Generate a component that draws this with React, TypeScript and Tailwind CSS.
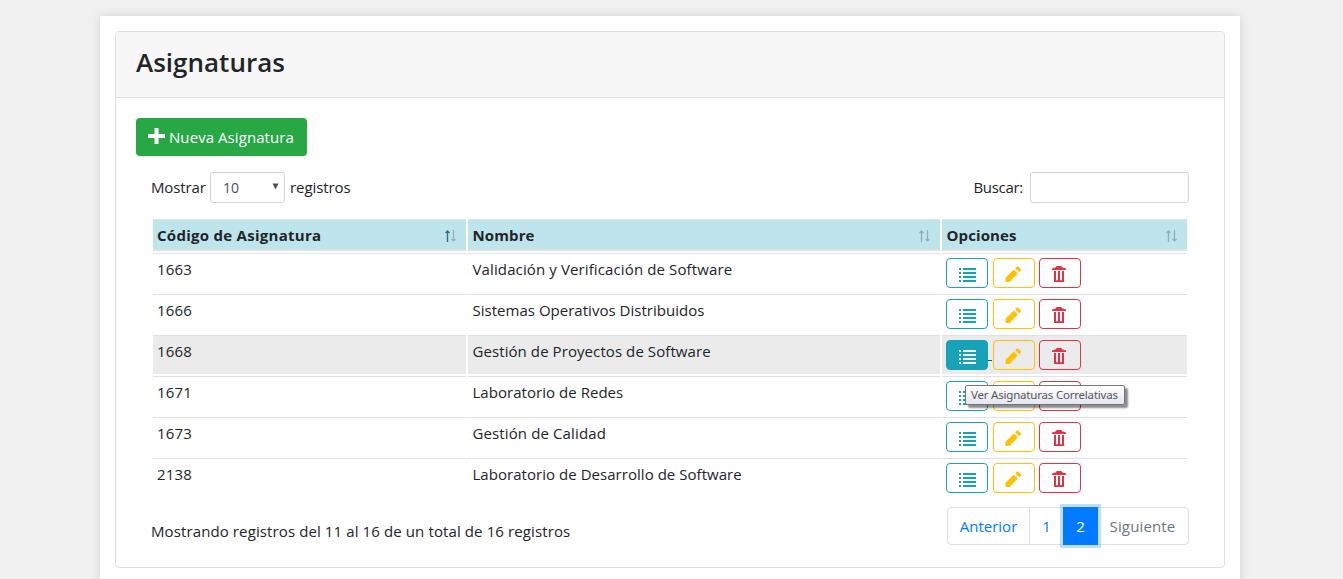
import React from "react";

const rows = [
  { code: "1663", name: "Validación y Verificación de Software", spacing: "tracking-[0.12px]" },
  { code: "1666", name: "Sistemas Operativos Distribuidos", spacing: "tracking-[0.02px]" },
  { code: "1668", name: "Gestión de Proyectos de Software", spacing: "tracking-[0.08px]", active: true },
  { code: "1671", name: "Laboratorio de Redes", spacing: "tracking-[0.04px]" },
  { code: "1673", name: "Gestión de Calidad", spacing: "tracking-[0.12px]" },
  { code: "2138", name: "Laboratorio de Desarrollo de Software", spacing: "tracking-[0.04px]" },
];

function ListIcon() {
  return (
    <svg className="relative top-[2px]" width="18" height="16" viewBox="0 0 18 16" fill="currentColor" shapeRendering="crispEdges">
      {[1, 5, 9, 13].map((y) => (
        <g key={y}>
          <rect x="1" y={y} width="2" height="2" />
          <rect x="5" y={y} width="13" height="2" />
        </g>
      ))}
    </svg>
  );
}

function PencilIcon() {
  return (
    <svg className="relative top-px" width="18" height="18" viewBox="0 0 18 18" fill="currentColor">
      <path d="M.5 17v-4.200L8.800 4.600l4 4L4.600 17zM10.200 3.200 11.900 1.500q.6-.6 1.200 0l2.800 2.800q.6.600 0 1.200L14.200 7.200z" />
    </svg>
  );
}

function TrashIcon() {
  return (
    <svg className="relative -left-px top-px" width="16" height="18" viewBox="0 0 16 18" fill="currentColor">
      <path d="M1 5V3.500L5 2.300 5.500 1h5l.5 1.300 4 1.200V5z" />
      <path d="M3 6h2v9.200h2V6h2v9.200h2V6h2v11H3z" />
    </svg>
  );
}

function SortIcon({ asc = false }: { asc?: boolean }) {
  return (
    <svg className="relative top-px" width="13" height="12" viewBox="0 0 13 12" fill="none">
      <path stroke={asc ? "#2f6f8f" : "#8fb0b6"} strokeWidth="1.400" d="M3.500 12V1M1.500 3 3.500 1l2 2" />
      <path stroke="#8fb0b6" strokeWidth="1.200" d="M9.500 0v11M7.500 9l2 2 2-2" />
    </svg>
  );
}

const btn = "flex h-[30px] w-[42px] items-center justify-center rounded-[4px] border";

function Actions({ active }: { active?: boolean }) {
  return (
    <div className="flex">
      <button className={`${btn} border-[#17a2b8] ${active ? "bg-[#17a2b8] text-white" : "text-[#17a2b8]"}`}>
        <ListIcon />
      </button>
      <span className={`mr-px mt-[20px] h-px w-1 ${active ? "bg-[#0056b3]" : ""}`} />
      <button className={`${btn} mr-1 border-[#ffc107] text-[#ffc107]`}>
        <PencilIcon />
      </button>
      <button className={`${btn} border-[#dc3545] text-[#dc3545]`}>
        <TrashIcon />
      </button>
    </div>
  );
}

function Head({ label, asc }: { label: string; asc?: boolean }) {
  return (
    <th className="h-8 border-t border-b-2 border-[#dee2e6] bg-[#bee5eb] p-0 pl-1 pr-[9px] font-bold">
      <div className="flex items-center justify-between">
        <span className={asc ? "tracking-[0.28px]" : "pl-[0.5px] tracking-[0.12px]"}>{label}</span>
        <SortIcon asc={asc} />
      </div>
    </th>
  );
}

export default function App() {
  return (
    <div className="h-[579px] overflow-hidden bg-[#f1f1f1] pl-[100px] pt-4 font-['Open_Sans','Noto_Sans',sans-serif] text-[15px] leading-6 text-[#212529]">
      <main className="h-[600px] w-[1140px] bg-white p-[15px] shadow-[0_0_10px_rgba(0,0,0,0.13)]">
        <section className="h-[537px] w-[1110px] rounded-[4px] border border-[#dfdfdf]">
          <header className="h-[66px] rounded-t-[3px] border-b border-[#dfdfdf] bg-[#f7f7f7] pl-5 pt-[13px]">
            <h1 className="text-[26px] font-semibold leading-[34px]">Asignaturas</h1>
          </header>
          <div className="px-5 pt-5">
            <button className="flex h-[38px] w-[171px] items-center rounded-[4px] bg-[#28a745] pl-3 tracking-[0.07px] text-white">
              <svg className="mr-[4px]" width="17" height="20" viewBox="0 0 17 20" fill="currentColor">
                <path d="M6.500 1h4v6H17v4h-6.500v6h-4v-6H0V7h6.500z" />
              </svg>
              Nueva Asignatura
            </button>
            <div className="mt-4 flex h-[31px] items-center pl-[15px] pr-[15px]">
              <span className="w-[59px] pb-0.5 tracking-[-0.12px]">Mostrar</span>
              <div className="flex h-[31px] w-[75px] items-center justify-between rounded-[3px] border border-[#ced4da] pl-3 pr-[5px] text-[14px] text-[#495057]">
                <span>10</span>
                <svg className="relative -top-px" width="7" height="7" viewBox="0 0 7 7" fill="#495057"><path d="M.5.5h6L3.500 6.500z" /></svg>
              </div>
              <span className="ml-[5px] pb-0.5 tracking-[-0.08px]">registros</span>
              <span className="ml-auto pb-0.5 tracking-[-0.3px]">Buscar:</span>
              <input className="ml-[7px] h-[31px] w-[159px] rounded-[3px] border border-[#ced4da]" />
            </div>
            <table className="ml-[15px] mt-[14px] w-[1038px] table-fixed border-separate border-spacing-[2px] text-left">
              <colgroup>
                <col className="w-[313px]" />
                <col className="w-[472px]" />
                <col className="w-[245px]" />
              </colgroup>
              <thead>
                <tr>
                  <Head label="Código de Asignatura" asc />
                  <Head label="Nombre" />
                  <Head label="Opciones" />
                </tr>
              </thead>
              <tbody>
                {rows.map((r) => (
                  <tr key={r.code} className={r.active ? "bg-[#ebebeb]" : ""}>
                    <td className="h-[39px] border-t border-[#dee2e6] px-1 pt-[3px] align-top tracking-[0.2px]">{r.code}</td>
                    <td className={`h-[39px] border-t border-[#dee2e6] pl-[4.5px] pr-1 pt-[3px] align-top ${r.spacing}`}>{r.name}</td>
                    <td className="h-[39px] border-t border-[#dee2e6] p-1 align-top">
                      <Actions active={r.active} />
                    </td>
                  </tr>
                ))}
              </tbody>
            </table>
            <div className="mt-2 flex justify-between pl-[15px] pr-[15px]">
              <p className="pt-[12px] tracking-[0.11px]">Mostrando registros del 11 al 16 de un total de 16 registros</p>
              <nav className="flex h-[38px] w-[242px] rounded-[4px] border border-[#dee2e6] leading-9 text-[#007bff]">
                <span className="w-[82px] border-r border-[#dee2e6] text-center">Anterior</span>
                <span className="w-[33px] text-center">1</span>
                <span className="-my-px h-[38px] w-[35px] bg-[#007bff] text-center leading-[38px] text-white shadow-[0_0_0_3px_rgba(0,123,255,0.25)]">2</span>
                <span className="flex-1 pr-px text-center tracking-[0.15px] text-[#6c757d]">Siguiente</span>
              </nav>
            </div>
          </div>
        </section>
      </main>
      <div role="tooltip" className="absolute left-[965px] top-[385px] h-5 w-[160px] rounded-[2px] border border-[#767676] bg-gradient-to-b from-white to-[#e4e5f0] pl-[5px] font-['Noto_Sans','Open_Sans',sans-serif] text-[11.500px] leading-[18px] tracking-[-0.2px] whitespace-nowrap text-[#575757] shadow-[3px_3px_2px_rgba(0,0,0,0.45)]">
        Ver Asignaturas Correlativas
      </div>
    </div>
  );
}
